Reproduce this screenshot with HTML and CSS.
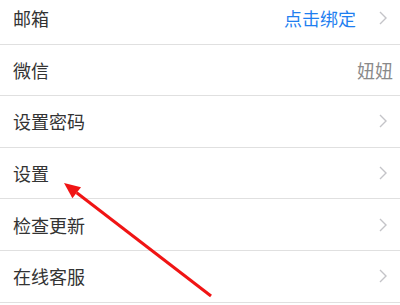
FILE: index.html
```html
<!DOCTYPE html>
<html lang="zh-CN">
<head>
    <meta charset="UTF-8">
    <meta name="viewport" content="width=device-width, initial-scale=1.0">
    <title>设置</title>
    <link rel="stylesheet" href="styles.css">
</head>
<body>
    <div class="page">
        <ul class="menu">
            <li class="item">
                <span class="label">邮箱</span>
                <span class="value link">点击绑定</span>
                <svg class="chevron" viewBox="0 0 8 14"><polyline points="1,1 7,7 1,13"/></svg>
            </li>
            <li class="item item-plain">
                <span class="label">微信</span>
                <span class="value">妞妞</span>
            </li>
            <li class="item">
                <span class="label">设置密码</span>
                <svg class="chevron" viewBox="0 0 8 14"><polyline points="1,1 7,7 1,13"/></svg>
            </li>
            <li class="item">
                <span class="label">设置</span>
                <svg class="chevron" viewBox="0 0 8 14"><polyline points="1,1 7,7 1,13"/></svg>
            </li>
            <li class="item">
                <span class="label">检查更新</span>
                <svg class="chevron" viewBox="0 0 8 14"><polyline points="1,1 7,7 1,13"/></svg>
            </li>
            <li class="item">
                <span class="label">在线客服</span>
                <svg class="chevron" viewBox="0 0 8 14"><polyline points="1,1 7,7 1,13"/></svg>
            </li>
        </ul>

        <!-- annotation arrow drawn over the list -->
        <svg class="arrow" viewBox="0 0 400 305">
            <line x1="211" y1="296" x2="76.7" y2="192.7"/>
            <polygon points="64,183 81,187.2 72.4,198.3"/>
        </svg>
    </div>
</body>
</html>
```

FILE: styles.css
```css
body {
    margin: 0;
    padding: 0;
    background-color: #fff;
    font-family: "Noto Sans CJK SC", "Noto Sans", sans-serif;
    color: #333;
}
.page {
    position: relative;
    width: 400px;
    height: 305px;
    overflow: hidden;
}
.menu {
    list-style: none;
    margin: -7px 0 0 0;
    padding: 0;
}
.item {
    display: flex;
    align-items: center;
    box-sizing: border-box;
    height: 51.6px;
    padding: 0 13px;
    border-bottom: 1px solid #e0e0e0;
    font-size: 18px;
}
.item-plain {
    padding-right: 7px;
}
.label {
    flex: 1;
}
.value {
    color: #8a8a8a;
}
.value.link {
    color: #1f7ff0;
    margin-right: 23px;
}
.chevron {
    width: 8px;
    height: 14px;
    fill: none;
    stroke: #c4c4c8;
    stroke-width: 1.4;
}
.arrow {
    position: absolute;
    top: 0;
    left: 0;
    width: 400px;
    height: 305px;
    pointer-events: none;
}
.arrow line {
    stroke: #f01414;
    stroke-width: 3;
}
.arrow polygon {
    fill: #f01414;
}
```
